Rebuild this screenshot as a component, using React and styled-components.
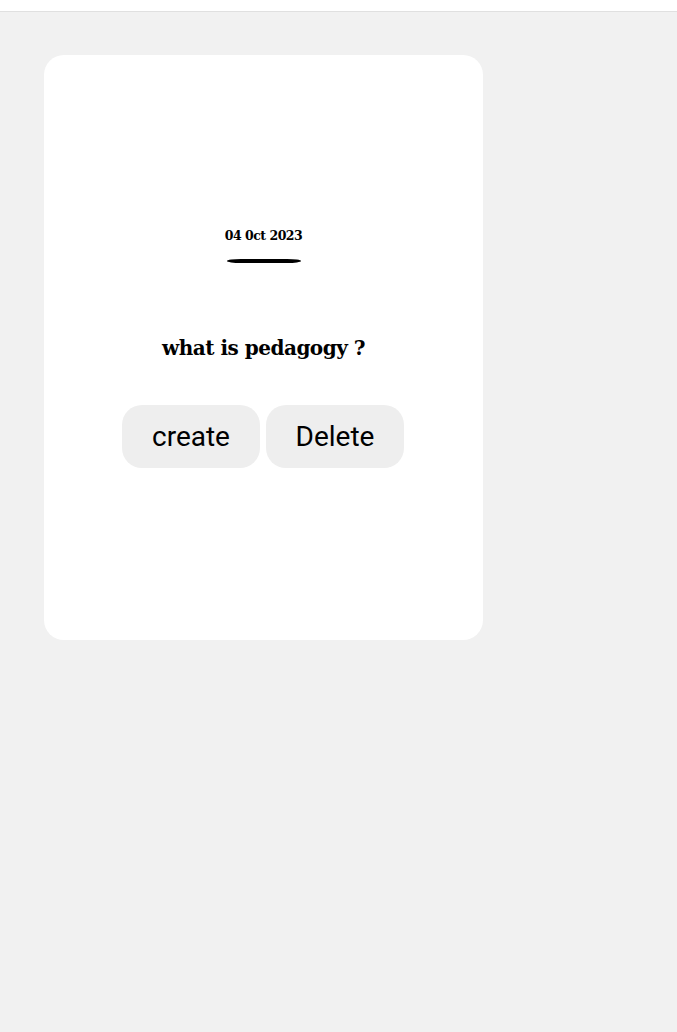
import React from "react";
import styled, { createGlobalStyle } from "styled-components";

const Global = createGlobalStyle`
  html, body { margin: 0; padding: 0; background: #f1f1f1; }
  body { font-family: "DejaVu Serif", serif; }
`;

const Page = styled.div`
  min-height: 1032px;
  background: #f1f1f1;
`;

const TopBar = styled.header`
  height: 11px;
  background: #ffffff;
  border-bottom: 1px solid #e0e0e0;
`;

const Content = styled.main`
  padding: 43px 44px;
`;

const Card = styled.section`
  width: 439px;
  height: 585px;
  background: #ffffff;
  border-radius: 20px;
  display: flex;
  flex-direction: column;
  align-items: center;
  justify-content: center;
  box-sizing: border-box;
`;

const DateText = styled.div`
  font-family: "DejaVu Serif", serif;
  font-weight: bold;
  font-size: 12.5px;
  letter-spacing: -0.5px;
  color: #000;
`;

const Divider = styled.div`
  width: 74px;
  height: 4px;
  margin-top: 16px;
  background: #000;
  border-radius: 14px / 2px;
`;

const Question = styled.h2`
  margin: 73px 0 0;
  font-family: "DejaVu Serif", serif;
  font-weight: bold;
  font-size: 20px;
  letter-spacing: -0.5px;
  color: #000;
`;

const Actions = styled.div`
  display: flex;
  gap: 6px;
  margin-top: 45px;
  margin-right: 1px;
`;

const Button = styled.button`
  width: 138px;
  height: 63px;
  border: none;
  border-radius: 20px;
  background: #eeeeee;
  font-family: Roboto, sans-serif;
  font-size: 28px;
  color: #000;
  padding: 0;
  cursor: pointer;
`;

export default function App() {
  return (
    <>
      <Global />
      <Page>
        <TopBar />
        <Content>
          <Card>
            <DateText>04 0ct 2023</DateText>
            <Divider />
            <Question>what is pedagogy ?</Question>
            <Actions>
              <Button>create</Button>
              <Button>Delete</Button>
            </Actions>
          </Card>
        </Content>
      </Page>
    </>
  );
}
